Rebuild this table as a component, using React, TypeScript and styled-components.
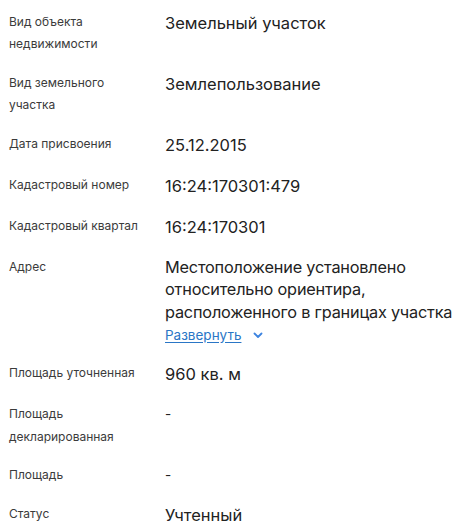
import React from "react";
import styled, { createGlobalStyle } from "styled-components";

const Global = createGlobalStyle`
  html, body { margin: 0; padding: 0; background: #ffffff; }
  body { font-family: Inter, "Noto Sans", sans-serif; -webkit-font-smoothing: antialiased; }
`;

const List = styled.div`
  display: flex;
  flex-direction: column;
  gap: 16px;
  padding: 10.5px 0 0 9px;
  width: 446px;
`;

const Row = styled.div`
  display: grid;
  grid-template-columns: 156px 1fr;
  align-items: start;
`;

const Label = styled.div`
  font-size: 12px;
  line-height: 22.5px;
  color: #3b3b3b;
  padding-right: 18px;
`;

const Value = styled.div<{ $small?: boolean }>`
  font-size: ${(p) => (p.$small ? "13.5px" : "16.5px")};
  line-height: ${(p) => (p.$small ? "22.5px" : "25px")};
  color: #222222;
`;

const Address = styled.div`
  font-size: 16.3px;
  line-height: 22.5px;
  letter-spacing: -0.2px;
  color: #222222;
`;

const AddressLine = styled.span`
  display: block;
  white-space: nowrap;
`;

const Expand = styled.button`
  display: flex;
  align-items: center;
  gap: 11px;
  margin: 0;
  padding: 0;
  height: 23px;
  border: none;
  background: none;
  font-family: inherit;
  font-size: 13.5px;
  color: #2a76c6;
  cursor: pointer;
`;

const ExpandText = styled.span`
  text-decoration: underline;
  text-underline-offset: 2px;
`;

const Chevron = () => (
  <svg width="12" height="12" viewBox="0 0 12 12" fill="none">
    <path d="M2.5 4.5 L6 8 L9.5 4.5" stroke="#3d84e0" strokeWidth="1.8" strokeLinecap="round" strokeLinejoin="round" />
  </svg>
);

const rows: { label: string; value: string }[] = [
  { label: "Вид объекта недвижимости", value: "Земельный участок" },
  { label: "Вид земельного участка", value: "Землепользование" },
  { label: "Дата присвоения", value: "25.12.2015" },
  { label: "Кадастровый номер", value: "16:24:170301:479" },
  { label: "Кадастровый квартал", value: "16:24:170301" },
];

const addressLines = [
  "Местоположение установлено",
  "относительно ориентира,",
  "расположенного в границах участка",
];

const rowsAfter: { label: string; value: string; small?: boolean }[] = [
  { label: "Площадь уточненная", value: "960 кв. м" },
  { label: "Площадь декларированная", value: "-", small: true },
  { label: "Площадь", value: "-", small: true },
  { label: "Статус", value: "Учтенный" },
];

export default function App() {
  return (
    <>
      <Global />
      <List>
        {rows.map((r) => (
          <Row key={r.label}>
            <Label>{r.label}</Label>
            <Value>{r.value}</Value>
          </Row>
        ))}
        <Row>
          <Label>Адрес</Label>
          <div>
            <Address>
              {addressLines.map((l) => (
                <AddressLine key={l}>{l}</AddressLine>
              ))}
            </Address>
            <Expand>
              <ExpandText>Развернуть</ExpandText>
              <Chevron />
            </Expand>
          </div>
        </Row>
        {rowsAfter.map((r) => (
          <Row key={r.label + r.value}>
            <Label>{r.label}</Label>
            <Value $small={r.small}>{r.value}</Value>
          </Row>
        ))}
      </List>
    </>
  );
}
